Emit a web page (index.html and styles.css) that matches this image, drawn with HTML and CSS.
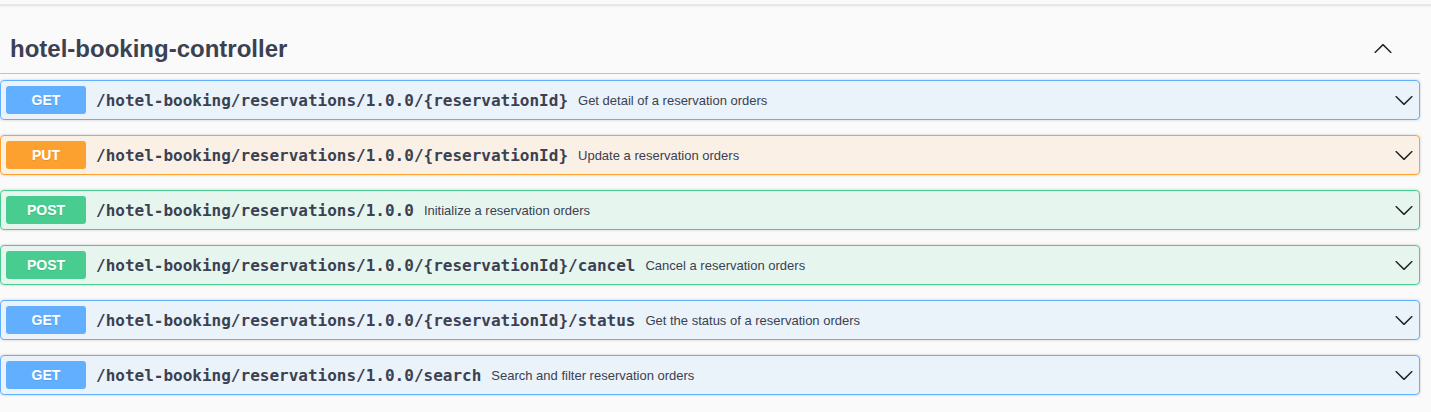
FILE: index.html
```html
<!DOCTYPE html>
<html lang="en">
<head>
<meta charset="utf-8">
<title>hotel-booking-controller</title>
<link rel="stylesheet" href="styles.css">
</head>
<body>
<div class="topbar"></div>
<div class="wrapper">
  <div class="tag-section">
    <h3 class="tag-header">
      <span class="tag-name">hotel-booking-controller</span>
      <svg class="arrow up" viewBox="0 0 20 20" width="20" height="20"><path d="M17.418 6.109c.272-.268.709-.268.979 0s.271.701 0 .969l-7.908 7.83c-.27.268-.707.268-.979 0l-7.908-7.83c-.27-.268-.27-.701 0-.969.271-.268.709-.268.979 0L10 13.25l7.418-7.141z"/></svg>
    </h3>
    <div class="opblock get">
      <span class="method">GET</span>
      <span class="path">/hotel-booking/reservations/1.0.0/{reservationId}</span>
      <span class="desc">Get detail of a reservation orders</span>
      <svg class="arrow" viewBox="0 0 20 20" width="20" height="20"><path d="M17.418 6.109c.272-.268.709-.268.979 0s.271.701 0 .969l-7.908 7.83c-.27.268-.707.268-.979 0l-7.908-7.830c-.27-.268-.27-.701 0-.969.271-.268.709-.268.979 0L10 13.25l7.418-7.141z"/></svg>
    </div>
    <div class="opblock put">
      <span class="method">PUT</span>
      <span class="path">/hotel-booking/reservations/1.0.0/{reservationId}</span>
      <span class="desc">Update a reservation orders</span>
      <svg class="arrow" viewBox="0 0 20 20" width="20" height="20"><path d="M17.418 6.109c.272-.268.709-.268.979 0s.271.701 0 .969l-7.908 7.83c-.27.268-.707.268-.979 0l-7.908-7.83c-.27-.268-.27-.701 0-.969.271-.268.709-.268.979 0L10 13.25l7.418-7.141z"/></svg>
    </div>
    <div class="opblock post">
      <span class="method">POST</span>
      <span class="path">/hotel-booking/reservations/1.0.0</span>
      <span class="desc">Initialize a reservation orders</span>
      <svg class="arrow" viewBox="0 0 20 20" width="20" height="20"><path d="M17.418 6.109c.272-.268.709-.268.979 0s.271.701 0 .969l-7.908 7.83c-.27.268-.707.268-.979 0l-7.908-7.83c-.27-.268-.27-.701 0-.969.271-.268.709-.268.979 0L10 13.25l7.418-7.141z"/></svg>
    </div>
    <div class="opblock post">
      <span class="method">POST</span>
      <span class="path">/hotel-booking/reservations/1.0.0/{reservationId}/cancel</span>
      <span class="desc">Cancel a reservation orders</span>
      <svg class="arrow" viewBox="0 0 20 20" width="20" height="20"><path d="M17.418 6.109c.272-.268.709-.268.979 0s.271.701 0 .969l-7.908 7.83c-.27.268-.707.268-.979 0l-7.908-7.83c-.27-.268-.27-.701 0-.969.271-.268.709-.268.979 0L10 13.25l7.418-7.141z"/></svg>
    </div>
    <div class="opblock get">
      <span class="method">GET</span>
      <span class="path">/hotel-booking/reservations/1.0.0/{reservationId}/status</span>
      <span class="desc">Get the status of a reservation orders</span>
      <svg class="arrow" viewBox="0 0 20 20" width="20" height="20"><path d="M17.418 6.109c.272-.268.709-.268.979 0s.271.701 0 .969l-7.908 7.83c-.27.268-.707.268-.979 0l-7.908-7.83c-.27-.268-.27-.701 0-.969.271-.268.709-.268.979 0L10 13.25l7.418-7.141z"/></svg>
    </div>
    <div class="opblock get">
      <span class="method">GET</span>
      <span class="path">/hotel-booking/reservations/1.0.0/search</span>
      <span class="desc">Search and filter reservation orders</span>
      <svg class="arrow" viewBox="0 0 20 20" width="20" height="20"><path d="M17.418 6.109c.272-.268.709-.268.979 0s.271.701 0 .969l-7.908 7.83c-.27.268-.707.268-.979 0l-7.908-7.83c-.27-.268-.27-.701 0-.969.271-.268.709-.268.979 0L10 13.25l7.418-7.141z"/></svg>
    </div>
  </div>
</div>
</body>
</html>
```
FILE: styles.css
```css
html, body {
  margin: 0;
  padding: 0;
  background: #fafafa;
  font-family: "Liberation Sans", Arial, sans-serif;
  color: #3b4151;
}

.topbar {
  height: 4px;
  background: #fafafa;
  border-bottom: 2px solid #e6e6e6;
  box-shadow: 0 1px 2px rgba(0, 0, 0, 0.04);
}

.wrapper {
  width: 1420px;
  padding-top: 19px;
}

.tag-header {
  display: flex;
  align-items: center;
  margin: 0 0 6px 0;
  padding: 8px 27px 8px 10px;
  height: 32px;
  border-bottom: 1px solid rgba(59, 65, 81, 0.3);
  font-size: 24px;
  font-weight: 700;
  color: #3b4151;
}

.tag-name {
  flex: 1;
}

.arrow {
  flex: none;
  fill: #222;
}

.arrow.up {
  transform: rotate(180deg);
}

.opblock {
  display: flex;
  align-items: center;
  box-sizing: border-box;
  height: 40px;
  padding: 5px;
  margin: 0 0 15px 0;
  border: 1px solid;
  border-radius: 4px;
  box-shadow: 0 0 3px rgba(0, 0, 0, 0.19);
}

.opblock.get {
  background: rgba(97, 175, 254, 0.1);
  border-color: #61affe;
}
.opblock.get .method { background: #61affe; }

.opblock.put {
  background: rgba(252, 161, 48, 0.1);
  border-color: #fca130;
}
.opblock.put .method { background: #fca130; }

.opblock.post {
  background: rgba(73, 204, 144, 0.1);
  border-color: #49cc90;
}
.opblock.post .method { background: #49cc90; }

.method {
  flex: none;
  width: 80px;
  height: 28px;
  line-height: 28px;
  border-radius: 3px;
  text-align: center;
  color: #fff;
  font-size: 14px;
  font-weight: 700;
  text-shadow: 0 1px 0 rgba(0, 0, 0, 0.1);
}

.path {
  flex: none;
  padding: 0 10px;
  font-family: "DejaVu Sans Mono", "Liberation Mono", monospace;
  font-size: 16px;
  font-weight: 700;
  color: #3b4151;
}

.desc {
  flex: 1;
  font-size: 13px;
  color: #3b4151;
}
```
